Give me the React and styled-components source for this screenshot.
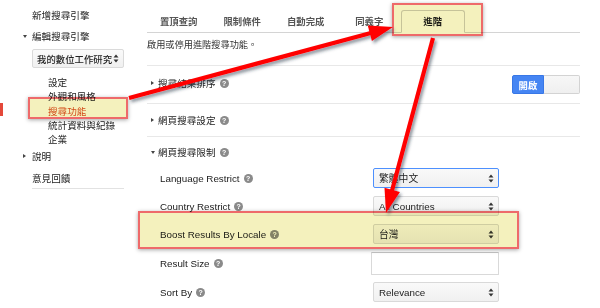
import React from 'react';
import styled, { createGlobalStyle, css } from 'styled-components';

const Global = createGlobalStyle`
  html, body { margin: 0; padding: 0; background: #fff; }
  body {
    font-family: "Liberation Sans", Arial, "Noto Sans CJK TC", sans-serif;
    font-size: 9.6px;
    color: #222;
  }
  * { box-sizing: border-box; }
`;

const highlight = css`
  content: "";
  position: absolute;
  z-index: 2;
  background: #f4f1bd;
  mix-blend-mode: multiply;
  border: 2px solid #ee6a6a;
  box-shadow: 0 1px 4px rgba(0, 0, 0, 0.35);
  pointer-events: none;
`;

const Page = styled.div`
  position: relative;
  width: 600px;
  height: 308px;
  overflow: hidden;
  display: flex;
`;

const EdgeMark = styled.div`
  position: absolute;
  left: 0;
  top: 103px;
  width: 3px;
  height: 13px;
  background: #e4483a;
`;

/* ---------- sidebar ---------- */
const Sidebar = styled.aside`
  width: 147px;
  flex: none;
  padding: 8px 23px 0;
  display: flex;
  flex-direction: column;
  font-family: "Noto Sans CJK TC", sans-serif;
  font-size: 9.6px;
  color: #222;
`;

const NavItem = styled.div`
  position: relative;
  display: flex;
  align-items: center;
  height: ${p => (p.$sub ? '14.3px' : '14px')};
  padding-left: ${p => (p.$sub ? 25 : 0)}px;
  margin-top: ${p => p.$gap || 0}px;
  color: ${p => (p.$active ? '#dc5020' : '#222')};
  white-space: nowrap;
  ${p => p.$highlight && css`
    &::after {
      ${highlight};
      top: -7px;
      bottom: -1px;
      left: 5px;
      right: -4px;
    }
  `}
`;

const Caret = styled.span`
  display: inline-flex;
  align-items: center;
  width: ${p => p.$w || 9}px;
  flex: none;
  &::before {
    content: "";
    display: block;
    ${p => (p.$dir === 'down'
      ? css`
        border-left: 2.5px solid transparent;
        border-right: 2.5px solid transparent;
        border-top: 3.5px solid #444;
      `
      : p.$dir === 'right'
        ? css`
        border-top: 2.5px solid transparent;
        border-bottom: 2.5px solid transparent;
        border-left: 3.5px solid #444;
      `
        : css``)}
  }
`;

const SideSelect = styled.div`
  margin: 6px 0 0 9px;
  height: 19px;
  width: 92px;
  display: flex;
  align-items: center;
  justify-content: space-between;
  padding: 0 4px 0 4px;
  border: 1px solid #dadada;
  border-radius: 2px;
  background: linear-gradient(#fafafa, #f0f0f0);
  color: #222;
  font-size: 9.4px;
  font-weight: 500;
`;

const SideDivider = styled.div`
  margin: 3px 0 0 9px;
  border-top: 1px solid #e2e2e2;
`;

/* ---------- main ---------- */
const Main = styled.main`
  width: 433px;
  flex: none;
  display: flex;
  flex-direction: column;
`;

const TabBar = styled.div`
  display: flex;
  align-items: flex-end;
  height: 33px;
  padding-top: 10px;
  border-bottom: 1px solid #d4d4d4;
`;

const Tab = styled.div`
  position: relative;
  width: 63.5px;
  flex: none;
  height: ${p => (p.$active ? 23 : 22)}px;
  margin-bottom: ${p => (p.$active ? -1 : 0)}px;
  display: flex;
  align-items: center;
  justify-content: center;
  font-family: "Noto Sans CJK TC", sans-serif;
  font-weight: 700;
  font-size: 9.4px;
  color: ${p => (p.$active ? '#1a1a1a' : '#555')};
  border: 1px solid ${p => (p.$active ? '#cfcfcf' : 'transparent')};
  border-bottom-color: ${p => (p.$active ? '#fff' : 'transparent')};
  border-radius: 3px 3px 0 0;
  background: #fff;
  padding-bottom: ${p => (p.$active ? 1 : 0)}px;
  ${p => p.$highlight && css`
    &::after {
      ${highlight};
      top: -8px;
      bottom: -4px;
      left: -10px;
      right: -19px;
    }
  `}
`;

const Description = styled.p`
  margin: 0 0 14px;
  padding-top: 4px;
  line-height: 14px;
  font-family: "Noto Sans CJK TC", sans-serif;
  font-size: 9.2px;
  color: #333;
`;

const Section = styled.section`
  border-top: 1px solid #e8e8e8;
  display: flex;
  flex-direction: column;
`;

const SectionHead = styled.div`
  display: flex;
  align-items: center;
  justify-content: space-between;
  height: ${p => p.$h}px;
  padding-top: ${p => p.$pt || 0}px;
  padding-bottom: ${p => p.$pb || 0}px;
  padding-left: 4px;
`;

const SectionTitle = styled.div`
  display: flex;
  align-items: center;
  font-family: "Noto Sans CJK TC", sans-serif;
  font-size: 9.6px;
  color: #222;
`;

const Help = styled.span`
  display: inline-flex;
  align-items: center;
  justify-content: center;
  width: 9px;
  height: 9px;
  margin-left: 4px;
  border-radius: 50%;
  background: #8a8a8a;
  color: #fff;
  font-family: "Liberation Sans", Arial, sans-serif;
  font-weight: 700;
  font-size: 7px;
  line-height: 1;
`;

const Toggle = styled.div`
  display: flex;
  height: 19px;
  margin-top: 3px;
`;

const ToggleOn = styled.div`
  width: 32px;
  display: flex;
  align-items: center;
  justify-content: center;
  background: #4585f3;
  border: 1px solid #3877e6;
  border-radius: 2px 0 0 2px;
  color: #fff;
  font-family: "Noto Sans CJK TC", sans-serif;
  font-weight: 700;
  font-size: 9.4px;
`;

const ToggleOff = styled.div`
  width: 36px;
  background: linear-gradient(#f7f7f7, #efefef);
  border: 1px solid #d3d3d3;
  border-left: none;
  border-radius: 0 2px 2px 0;
`;

const FieldRow = styled.div`
  position: relative;
  display: flex;
  align-items: center;
  height: ${p => p.$h || 28}px;
  padding-left: 13px;
  ${p => p.$highlight && css`
    &::after {
      ${highlight};
      top: -9px;
      bottom: -1px;
      left: -9px;
      right: 61px;
    }
  `}
`;

const FieldLabel = styled.div`
  width: 211px;
  flex: none;
  display: flex;
  align-items: center;
  font-family: "Liberation Sans", Arial, sans-serif;
  font-size: 9.8px;
  color: #222;
`;

const Select = styled.div`
  margin-left: 2px;
  width: 126px;
  height: 20px;
  display: flex;
  align-items: center;
  justify-content: space-between;
  padding: 0 4px 0 5px;
  border: 1px solid ${p => (p.$focused ? '#4d90fe' : '#d9d9d9')};
  border-radius: 2px;
  background: linear-gradient(#f9f9f9, #f0f0f0);
  font-family: "Liberation Sans", Arial, "Noto Sans CJK TC", sans-serif;
  font-size: 9.8px;
  color: #222;
`;

const TextInput = styled.div`
  width: 128px;
  height: 23px;
  border: 1px solid #d9d9d9;
  border-top-color: #c4c4c4;
  border-radius: 1px;
  background: #fff;
`;

const ArrowLayer = styled.svg`
  position: absolute;
  left: 0;
  top: 0;
  z-index: 3;
  pointer-events: none;
`;

const UpDown = () => (
  <svg width="6" height="9" viewBox="0 0 6 9">
    <path d="M0.5 3.6 L3 0.6 L5.5 3.6 Z" fill="#333" />
    <path d="M0.5 5.4 L3 8.4 L5.5 5.4 Z" fill="#333" />
  </svg>
);

const HelpIcon = () => <Help>?</Help>;

function arrowPoints(x1, y1, x2, y2, len = 24, half = 8) {
  const dx = x2 - x1;
  const dy = y2 - y1;
  const l = Math.hypot(dx, dy);
  const ux = dx / l;
  const uy = dy / l;
  const nx = -uy;
  const ny = ux;
  const bx = x2 - ux * len;
  const by = y2 - uy * len;
  return {
    line: `M${x1} ${y1} L${bx + ux * 2} ${by + uy * 2}`,
    head: `M${x2} ${y2} L${bx + nx * half} ${by + ny * half} L${bx - nx * half} ${by - ny * half} Z`,
  };
}

const Arrow = ({ from, to }) => {
  const a = arrowPoints(from[0], from[1], to[0], to[1]);
  return (
    <g filter="url(#shadow)">
      <path d={a.line} stroke="#ff0000" strokeWidth="4.2" fill="none" />
      <path d={a.head} fill="#ff0000" />
    </g>
  );
};

const tabs = ['置頂查詢', '限制條件', '自動完成', '同義字', '進階'];

const fields = [
  { label: 'Language Restrict', kind: 'select', value: '繁體中文', focused: true },
  { label: 'Country Restrict', kind: 'select', value: 'All Countries' },
  { label: 'Boost Results By Locale', kind: 'select', value: '台灣', highlight: true },
  { label: 'Result Size', kind: 'input', h: 30 },
  { label: 'Sort By', kind: 'select', value: 'Relevance' },
];

export default function App() {
  return (
    <>
      <Global />
      <Page>
        <EdgeMark />
        <Sidebar>
          <NavItem>
            <Caret />
            新增搜尋引擎
          </NavItem>
          <NavItem $gap={7}>
            <Caret $dir="down" />
            編輯搜尋引擎
          </NavItem>
          <SideSelect>
            <span>我的數位工作研究</span>
            <UpDown />
          </SideSelect>
          <NavItem $sub $gap={7}>設定</NavItem>
          <NavItem $sub>外觀和風格</NavItem>
          <NavItem $sub $active $highlight>搜尋功能</NavItem>
          <NavItem $sub>統計資料與紀錄</NavItem>
          <NavItem $sub>企業</NavItem>
          <NavItem $gap={2.5}>
            <Caret $dir="right" />
            說明
          </NavItem>
          <NavItem $gap={8}>
            <Caret />
            意見回饋
          </NavItem>
          <SideDivider />
        </Sidebar>

        <Main>
          <TabBar>
            {tabs.map((t, i) => (
              <Tab key={t} $active={i === 4} $highlight={i === 4}>
                {t}
              </Tab>
            ))}
          </TabBar>
          <Description>啟用或停用進階搜尋功能。</Description>

          <Section>
            <SectionHead $h={37} $pb={3}>
              <SectionTitle>
                <Caret $dir="right" $w={7} />
                搜尋結果排序
                <HelpIcon />
              </SectionTitle>
              <Toggle>
                <ToggleOn>開啟</ToggleOn>
                <ToggleOff />
              </Toggle>
            </SectionHead>
          </Section>

          <Section>
            <SectionHead $h={32}>
              <SectionTitle>
                <Caret $dir="right" $w={7} />
                網頁搜尋設定
                <HelpIcon />
              </SectionTitle>
            </SectionHead>
          </Section>

          <Section>
            <SectionHead $h={27} $pt={3}>
              <SectionTitle>
                <Caret $dir="down" $w={7} />
                網頁搜尋限制
                <HelpIcon />
              </SectionTitle>
            </SectionHead>
            {fields.map(f => (
              <FieldRow key={f.label} $h={f.h} $highlight={f.highlight}>
                <FieldLabel>
                  {f.label}
                  <HelpIcon />
                </FieldLabel>
                {f.kind === 'select' ? (
                  <Select $focused={f.focused}>
                    <span>{f.value}</span>
                    <UpDown />
                  </Select>
                ) : (
                  <TextInput />
                )}
              </FieldRow>
            ))}
          </Section>
        </Main>

        <ArrowLayer width="600" height="308" viewBox="0 0 600 308">
          <defs>
            <filter id="shadow" x="-20%" y="-20%" width="140%" height="140%">
              <feDropShadow dx="2" dy="2.5" stdDeviation="1.4" floodColor="#203040" floodOpacity="0.5" />
            </filter>
          </defs>
          <Arrow from={[129, 98]} to={[393, 27]} />
          <Arrow from={[433, 38]} to={[386, 213]} />
        </ArrowLayer>
      </Page>
    </>
  );
}
